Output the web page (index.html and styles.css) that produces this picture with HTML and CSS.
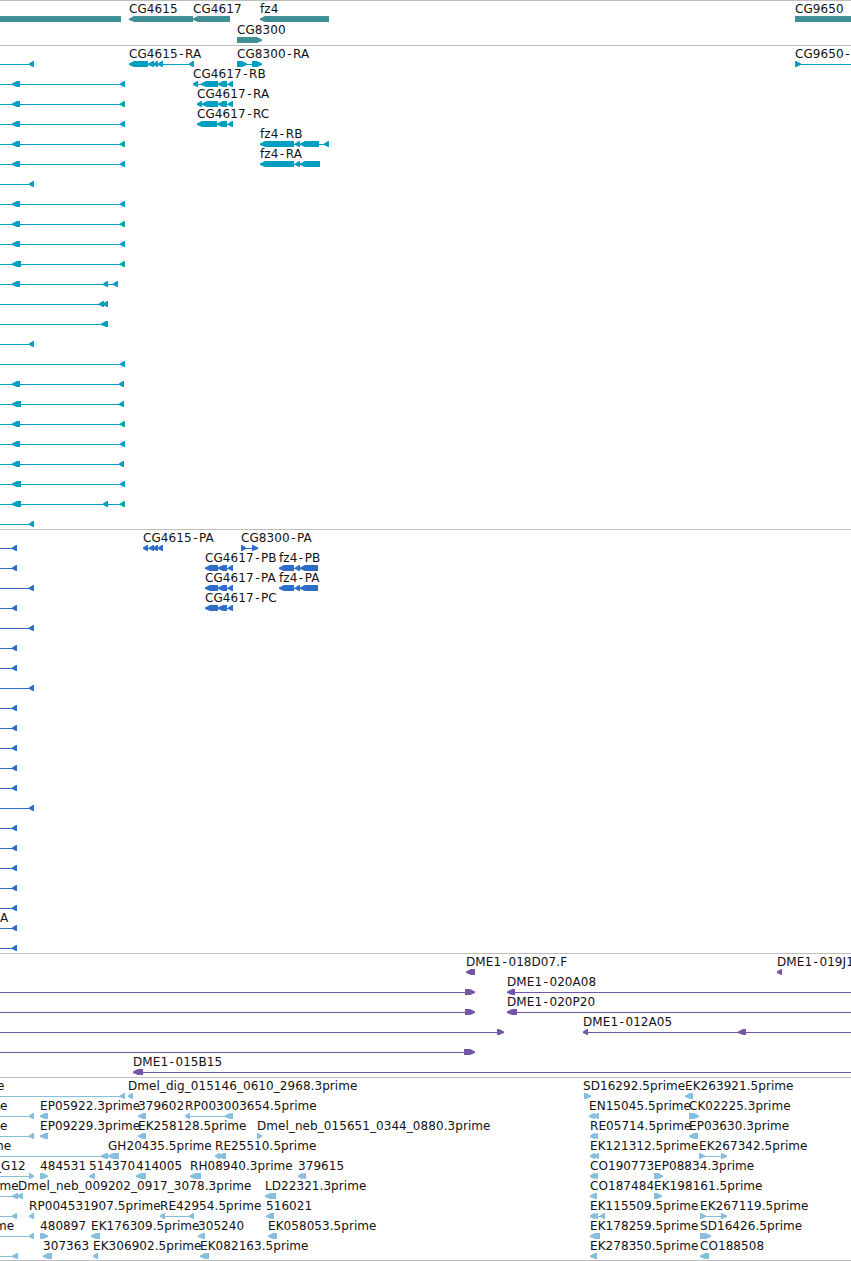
FILE: index.html
```html
<!DOCTYPE html>
<html lang="en">
<head>
    <meta charset="UTF-8">
    <meta name="viewport" content="width=device-width, initial-scale=1.0">
    <title>Genome tracks</title>
    <link rel="stylesheet" href="styles.css">
</head>
<body>
    <main class="tracks">
        <svg class="track genes" id="genes"></svg>
        <svg class="track transcripts" id="transcripts"></svg>
        <svg class="track proteins" id="proteins"></svg>
        <svg class="track clones" id="clones"></svg>
        <svg class="track ests" id="ests"></svg>
    </main>
    <script src="script.js"></script>
</body>
</html>
```
FILE: styles.css
```css
body {
    margin: 0;
    background-color: #fff;
    overflow: hidden;
}
.tracks {
    display: flex;
    flex-direction: column;
    border-bottom: 1px solid #bebebe;
}
.track {
    display: block;
    box-sizing: border-box;
    width: 100%;
    border-top: 1px solid #bebebe;
    overflow: hidden;
}
.track text {
    font-family: "DejaVu Sans", sans-serif;
    font-size: 12px;
    letter-spacing: 0.06px;
    fill: #111;
}
.track rect {
    shape-rendering: crispEdges;
}
.genes {
    height: 45px;
    fill: #3f8f94;
}
.transcripts {
    height: 484px;
    fill: #009fbf;
}
.proteins {
    height: 424px;
    fill: #306dcb;
}
.clones {
    height: 124px;
    fill: #7357a6;
}
.ests {
    height: 183px;
    fill: #88bedd;
}
```
FILE: script.js
```js
const SVG = "http://www.w3.org/2000/svg";
const EDGE = 860;

// [row, label, label x, direction, exons, line start, line end]
const genes = [
    [0, "", 0, 0, [[-10, 121]]],
    [0, "CG4615", 129, -1, [[129, 193]]],
    [0, "CG4617", 193, -1, [[193, 230]]],
    [0, "fz4", 260, -1, [[260, 329]]],
    [0, "CG9650", 795, 0, [[795, EDGE]]],
    [1, "CG8300", 237, 1, [[237, 262]]]
];

const transcripts = [
    [0, "CG4615-RA", 129, -1, [[129, 148], [148, 154], [153, 158], [158, 163], [189, 194]]],
    [0, "CG8300-RA", 237, 1, [[237, 247], [252, 262]]],
    [0, "CG9650-RA", 795, 1, [[795, 801]], 795, EDGE],
    [1, "CG4617-RB", 193, -1, [[193, 198], [201, 218], [218, 227], [228, 233]]],
    [2, "CG4617-RA", 197, -1, [[197, 202], [202, 218], [218, 227], [228, 233]]],
    [3, "CG4617-RC", 197, -1, [[197, 217], [217, 227], [228, 233]]],
    [4, "fz4-RB", 260, -1, [[260, 294], [295, 300], [300, 319], [324, 329]]],
    [5, "fz4-RA", 260, -1, [[260, 294], [295, 300], [300, 320]]]
];

// transcripts that start left of the visible region, one per row
const leftTranscripts = [
    [[29, 34]],
    [[12, 20], [120, 125]],
    [[12, 20], [120, 125]],
    [[12, 20], [120, 125]],
    [[12, 20], [120, 125]],
    [[12, 20], [120, 125]],
    [[29, 34]],
    [[12, 20], [120, 125]],
    [[12, 20], [120, 125]],
    [[12, 20], [120, 125]],
    [[12, 21], [120, 125]],
    [[12, 20], [103, 108], [113, 118]],
    [[99, 104], [103, 108]],
    [[101, 108]],
    [[29, 34]],
    [[120, 125]],
    [[12, 20], [119, 124]],
    [[12, 21], [119, 124]],
    [[12, 20], [120, 125]],
    [[12, 20], [120, 125]],
    [[12, 20], [119, 124]],
    [[12, 21], [120, 125]],
    [[12, 21], [103, 108], [120, 125]],
    [[29, 34]]
];
leftTranscripts.forEach((exons, row) => transcripts.push([row, "", 0, -1, exons, -10]));

const proteins = [
    [0, "CG4615-PA", 143, -1, [[143, 148], [149, 154], [153, 158], [158, 163]]],
    [0, "CG8300-PA", 241, 1, [[241, 246], [252, 258]]],
    [1, "CG4617-PB", 205, -1, [[205, 218], [218, 227], [228, 233]]],
    [1, "fz4-PB", 279, -1, [[279, 294], [295, 300], [300, 318]]],
    [2, "CG4617-PA", 205, -1, [[205, 218], [218, 227], [228, 233]]],
    [2, "fz4-PA", 279, -1, [[279, 294], [295, 300], [300, 318]]],
    [3, "CG4617-PC", 205, -1, [[205, 218], [218, 227], [228, 233]]],
    [19, "A", 0, -1, []]
];
for (let row = 0; row <= 20; row++) {
    const end = [2, 4, 7, 13].includes(row) ? 34 : 17;
    proteins.push([row, "", 0, -1, [[end - 5, end]], -10]);
}

const clones = [
    [0, "DME1-018D07.F", 466, -1, [[466, 475]]],
    [0, "DME1-019J1", 777, -1, [[777, 782]]],
    [1, "", 0, 1, [[465, 475]], -10],
    [1, "DME1-020A08", 507, -1, [[507, 515]], 507, EDGE],
    [2, "", 0, 1, [[465, 475]], -10],
    [2, "DME1-020P20", 507, -1, [[507, 517]], 507, EDGE],
    [3, "", 0, 1, [[497, 504]], -10],
    [3, "DME1-012A05", 583, -1, [[583, 588], [738, 746]], 583, EDGE],
    [4, "", 0, 1, [[464, 475]], -10],
    [5, "DME1-015B15", 133, -1, [[133, 143]], 133, EDGE]
];

const ests = [
    [0, "e", -3, -1, [[120, 125]], -10],
    [0, "Dmel_dig_015146_0610_2968.3prime", 128, -1, [[128, 133]]],
    [0, "SD16292.5prime", 583, 1, [[584, 591]]],
    [0, "EK263921.5prime", 685, -1, [[685, 693]]],
    [1, "e", 0, -1, [[29, 34]], -10],
    [1, "EP05922.3prime", 40, -1, [[40, 48]]],
    [1, "379602", 138, -1, [[138, 146]]],
    [1, "RP003003654.5prime", 185, -1, [[185, 190], [225, 231], [228, 233]]],
    [1, "EN15045.5prime", 589, -1, [[589, 595], [593, 599]]],
    [1, "CK02225.3prime", 689, 1, [[689, 699]]],
    [2, "e", 0, -1, [[29, 34]], -10],
    [2, "EP09229.3prime", 40, -1, [[40, 48]]],
    [2, "EK258128.5prime", 138, -1, [[138, 146]]],
    [2, "Dmel_neb_015651_0344_0880.3prime", 257, 1, [[257, 262]]],
    [2, "RE05714.5prime", 590, -1, [[590, 595], [593, 598]]],
    [2, "EP03630.3prime", 689, -1, [[689, 698]]],
    [3, "me", -8, -1, [[101, 108]], -10],
    [3, "GH20435.5prime", 108, -1, [[108, 119]]],
    [3, "RE25510.5prime", 215, -1, [[215, 220], [218, 226]]],
    [3, "EK121312.5prime", 590, -1, [[590, 595], [593, 599]]],
    [3, "EK267342.5prime", 699, 1, [[699, 705], [721, 727]]],
    [4, "_G12", -5, 1, [[29, 34]], -10],
    [4, "484531", 40, 1, [[40, 48]]],
    [4, "514370", 89, -1, [[89, 95]]],
    [4, "414005", 136, -1, [[136, 146]]],
    [4, "RH08940.3prime", 190, -1, [[190, 201]]],
    [4, "379615", 298, -1, [[298, 303], [301, 306]]],
    [4, "CO190773", 590, -1, [[590, 595], [593, 598]]],
    [4, "EP08834.3prime", 654, 1, [[654, 663]]],
    [5, "ime", -4, -1, [[12, 18]], -10],
    [5, "Dmel_neb_009202_0917_3078.3prime", 18, -1, [[17, 23]]],
    [5, "LD22321.3prime", 265, -1, [[265, 276]]],
    [5, "CO187484", 590, -1, [[590, 597]]],
    [5, "EK198161.5prime", 654, 1, [[654, 662]]],
    [6, "", 0, -1, [[12, 17]], -10],
    [6, "RP004531907.5prime", 29, -1, [[29, 34]]],
    [6, "RE42954.5prime", 160, -1, [[160, 165], [189, 194]]],
    [6, "516021", 266, -1, [[266, 274]]],
    [6, "EK115509.5prime", 590, -1, [[590, 595], [593, 598], [600, 605]]],
    [6, "EK267119.5prime", 700, 1, [[700, 706], [721, 727]]],
    [7, "me", -5, -1, [[29, 34]], -10],
    [7, "480897", 40, 1, [[40, 48]]],
    [7, "EK176309.5prime", 91, -1, [[91, 100]]],
    [7, "305240", 198, -1, [[198, 205]]],
    [7, "EK058053.5prime", 268, -1, [[268, 277]]],
    [7, "EK178259.5prime", 590, -1, [[590, 600]]],
    [7, "SD16426.5prime", 700, 1, [[700, 711]]],
    [8, "", 0, -1, [[12, 18]], -10],
    [8, "307363", 43, -1, [[43, 52]]],
    [8, "EK306902.5prime", 93, -1, [[93, 98]]],
    [8, "EK082163.5prime", 200, -1, [[200, 209]]],
    [8, "EK278350.5prime", 590, -1, [[590, 597]]],
    [8, "CO188508", 700, -1, [[700, 709]]]
];

function add(parent, tag, attrs) {
    const el = document.createElementNS(SVG, tag);
    for (const key in attrs) {
        el.setAttribute(key, attrs[key]);
    }
    parent.appendChild(el);
    return el;
}

function exonPoints(start, end, top, dir) {
    const head = Math.min(end - start - 1, 5);
    const bottom = top + 6;
    // blunt tip, so that it meets the 1px line
    const a = top + 2.5;
    const b = top + 4;
    if (dir < 0) {
        return `${start},${a} ${start + head},${top} ${end},${top} ${end},${bottom} ${start + head},${bottom} ${start},${b}`;
    }
    return `${end},${a} ${end - head},${top} ${start},${top} ${start},${bottom} ${end - head},${bottom} ${end},${b}`;
}

function drawTrack(id, features, rowHeight) {
    const svg = document.getElementById(id);
    features.forEach(([row, label, labelX, dir, exons, from, to]) => {
        const y = row * rowHeight;
        if (exons.length) {
            const start = from === undefined ? exons[0][0] : from;
            const end = to === undefined ? exons[exons.length - 1][1] : to;
            add(svg, "rect", { x: start + 1, y: y + 18, width: end - start - 2, height: 1 });
        }
        exons.forEach(([start, end]) => {
            if (dir === 0) {
                add(svg, "rect", { x: start, y: y + 15, width: end - start, height: 6 });
            } else {
                add(svg, "polygon", { points: exonPoints(start, end, y + 15, dir) });
            }
        });
        if (label) {
            const text = add(svg, "text", { x: labelX, y: y + 12 });
            text.textContent = label;
            // a little air on both sides of the hyphen
            const hyphen = label.indexOf("-");
            if (hyphen > 0) {
                const dx = new Array(hyphen).fill(0).concat(1.5, 1.5);
                text.setAttribute("dx", dx.join(" "));
            }
        }
    });
}

drawTrack("genes", genes, 21);
drawTrack("transcripts", transcripts, 20);
drawTrack("proteins", proteins, 20);
drawTrack("clones", clones, 20);
drawTrack("ests", ests, 20);
```
